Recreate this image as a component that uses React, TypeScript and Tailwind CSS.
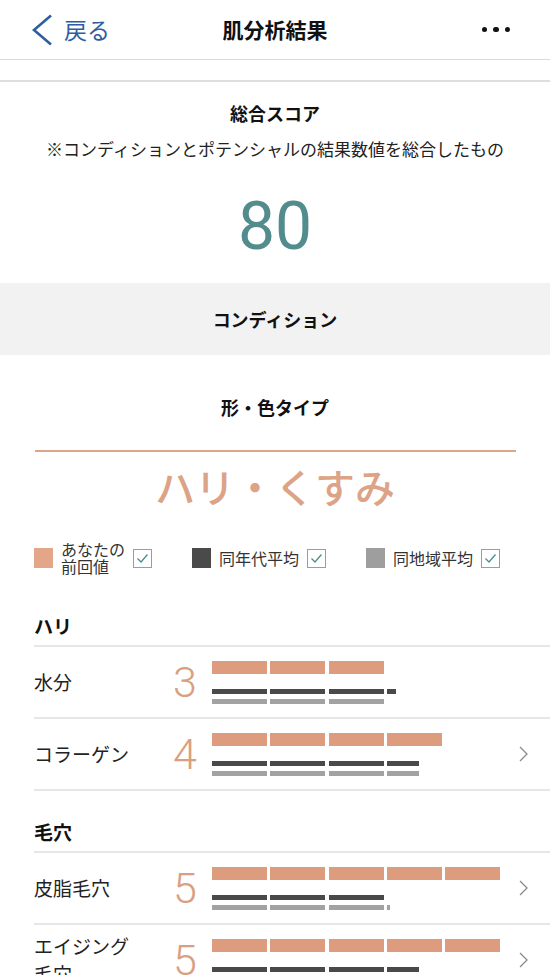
import React from "react";

type Row = {
  label: React.ReactNode;
  score: number;
  mine: number;
  age: number[];
  area: number[];
  arrow: boolean;
};

const SEG = 55;

const hari: Row[] = [
  { label: "水分", score: 3, mine: 3, age: [1, 1, 1, 0.16], area: [1, 1, 1], arrow: false },
  { label: "コラーゲン", score: 4, mine: 4, age: [1, 1, 1, 0.58], area: [1, 1, 1, 0.58], arrow: true },
];

const keana: Row[] = [
  { label: "皮脂毛穴", score: 5, mine: 5, age: [1, 1, 1], area: [1, 1, 1, 0.05], arrow: true },
  {
    label: (
      <>
        エイジング
        <br />
        毛穴
      </>
    ),
    score: 5,
    mine: 5,
    age: [1, 1, 1, 0.58],
    area: [1, 1, 1, 0.47],
    arrow: true,
  },
];

function CheckBox() {
  return (
    <span className="flex h-[19px] w-[19px] items-center justify-center border-[1.5px] border-[#9c9c9c] bg-white">
      <svg width="13" height="11" viewBox="0 0 13 11" fill="none">
        <path d="M1.5 5.5 L5 9 L11.5 1.5" stroke="#4f8c8c" strokeWidth="1.3" />
      </svg>
    </span>
  );
}

function Chevron() {
  return (
    <svg width="9" height="16" viewBox="0 0 9 16" fill="none">
      <path d="M1 1 L8 8 L1 15" stroke="#8a8a8a" strokeWidth="1.3" />
    </svg>
  );
}

function Segs({ values, color, h }: { values: number[]; color: string; h: string }) {
  return (
    <div className="flex gap-[3.3px]">
      {values.map((v, i) => (
        <div key={i} className={`${h} ${color}`} style={{ width: Math.max(3, Math.round(SEG * v)) }} />
      ))}
    </div>
  );
}

function ScoreRow({ row }: { row: Row }) {
  return (
    <div className="flex h-[72px] items-center border-b-2 border-[#e6e6e6] pr-[20px]">
      <div className="w-[139px] text-[19px] leading-[28px] text-[#222]">{row.label}</div>
      <div className="w-[39px] font-['Roboto',sans-serif] text-[43px] font-light leading-none text-[#d99f80]">
        {row.score}
      </div>
      <div className="flex flex-1 flex-col pt-[1px]">
        <Segs values={Array(row.mine).fill(1)} color="bg-[#dc9c7d]" h="h-[13px]" />
        <div className="mt-[15px]">
          <Segs values={row.age} color="bg-[#494949]" h="h-[5px]" />
        </div>
        <div className="mt-[5px]">
          <Segs values={row.area} color="bg-[#a2a2a2]" h="h-[5px]" />
        </div>
      </div>
      <div className="flex w-[14px] justify-center">{row.arrow && <Chevron />}</div>
    </div>
  );
}

function Group({ title, rows, top }: { title: string; rows: Row[]; top: string }) {
  return (
    <div className={`pl-[34px] ${top}`}>
      <div className="border-b-2 border-[#e6e6e6] pb-[6px] text-[19px] font-bold leading-[26px] text-[#111]">
        {title}
      </div>
      {rows.map((r, i) => (
        <ScoreRow key={i} row={r} />
      ))}
    </div>
  );
}

export default function App() {
  return (
    <div className="h-[975px] w-[550px] overflow-hidden bg-white font-['Noto_Sans_CJK_JP',sans-serif] text-[#111]">
      <header className="grid h-[60px] grid-cols-[1fr_auto_1fr] items-center border-b border-[#dadada]">
        <div className="flex items-center pl-[31px] text-[#2f5e9f]">
          <svg width="22" height="32" viewBox="0 0 22 32" fill="none">
            <path d="M20 1.5 L3 16 L20 30.5" stroke="#2f5e9f" strokeWidth="2.6" />
          </svg>
          <span className="ml-[11px] text-[23px] leading-none">戻る</span>
        </div>
        <h1 className="text-[21px] font-bold leading-none">肌分析結果</h1>
        <div className="flex justify-end gap-[6px] pr-[40px]">
          <span className="h-[5.5px] w-[5.5px] rounded-full bg-[#111]" />
          <span className="h-[5.5px] w-[5.5px] rounded-full bg-[#111]" />
          <span className="h-[5.5px] w-[5.5px] rounded-full bg-[#111]" />
        </div>
      </header>
      <div className="h-[22px] border-b-2 border-[#dedede]" />

      <section className="flex flex-col items-center pb-[23px] pt-[18px]">
        <h2 className="text-[18px] font-bold leading-[26px]">総合スコア</h2>
        <p className="mt-[11px] text-[17px] leading-[24px] text-[#222]">
          ※コンディションとポテンシャルの結果数値を総合したもの
        </p>
        <div className="mt-[33px] font-['Roboto',sans-serif] text-[66px] font-normal leading-none text-[#528c8c]">
          80
        </div>
      </section>

      <div className="flex h-[72px] items-center justify-center bg-[#f2f2f2] text-[18px] font-bold">
        コンディション
      </div>

      <section className="flex flex-col items-center pt-[39px]">
        <h3 className="text-[18px] font-bold leading-[26px]">形・色タイプ</h3>
        <div className="mt-[30px] h-[2px] w-[481px] bg-[#dca68b]" />
        <div className="mt-[10px] text-[40px] font-medium leading-[48px] text-[#dca386]">ハリ・くすみ</div>
      </section>

      <div className="mt-[31px] flex items-center gap-[40px] pl-[34px] text-[16px] text-[#333]">
        <div className="flex items-center gap-[8px]">
          <span className="h-[20px] w-[19px] bg-[#e3a688]" />
          <span className="flex flex-col leading-[17px]">
            <span>あなたの</span>
            <span>前回値</span>
          </span>
          <CheckBox />
        </div>
        <div className="flex items-center gap-[8px]">
          <span className="h-[20px] w-[19px] bg-[#4a4a4a]" />
          <span className="leading-[17px]">同年代平均</span>
          <CheckBox />
        </div>
        <div className="flex items-center gap-[8px]">
          <span className="h-[20px] w-[19px] bg-[#9e9e9e]" />
          <span className="leading-[17px]">同地域平均</span>
          <CheckBox />
        </div>
      </div>

      <Group title="ハリ" rows={hari} top="mt-[38px]" />
      <Group title="毛穴" rows={keana} top="mt-[28px]" />
    </div>
  );
}
